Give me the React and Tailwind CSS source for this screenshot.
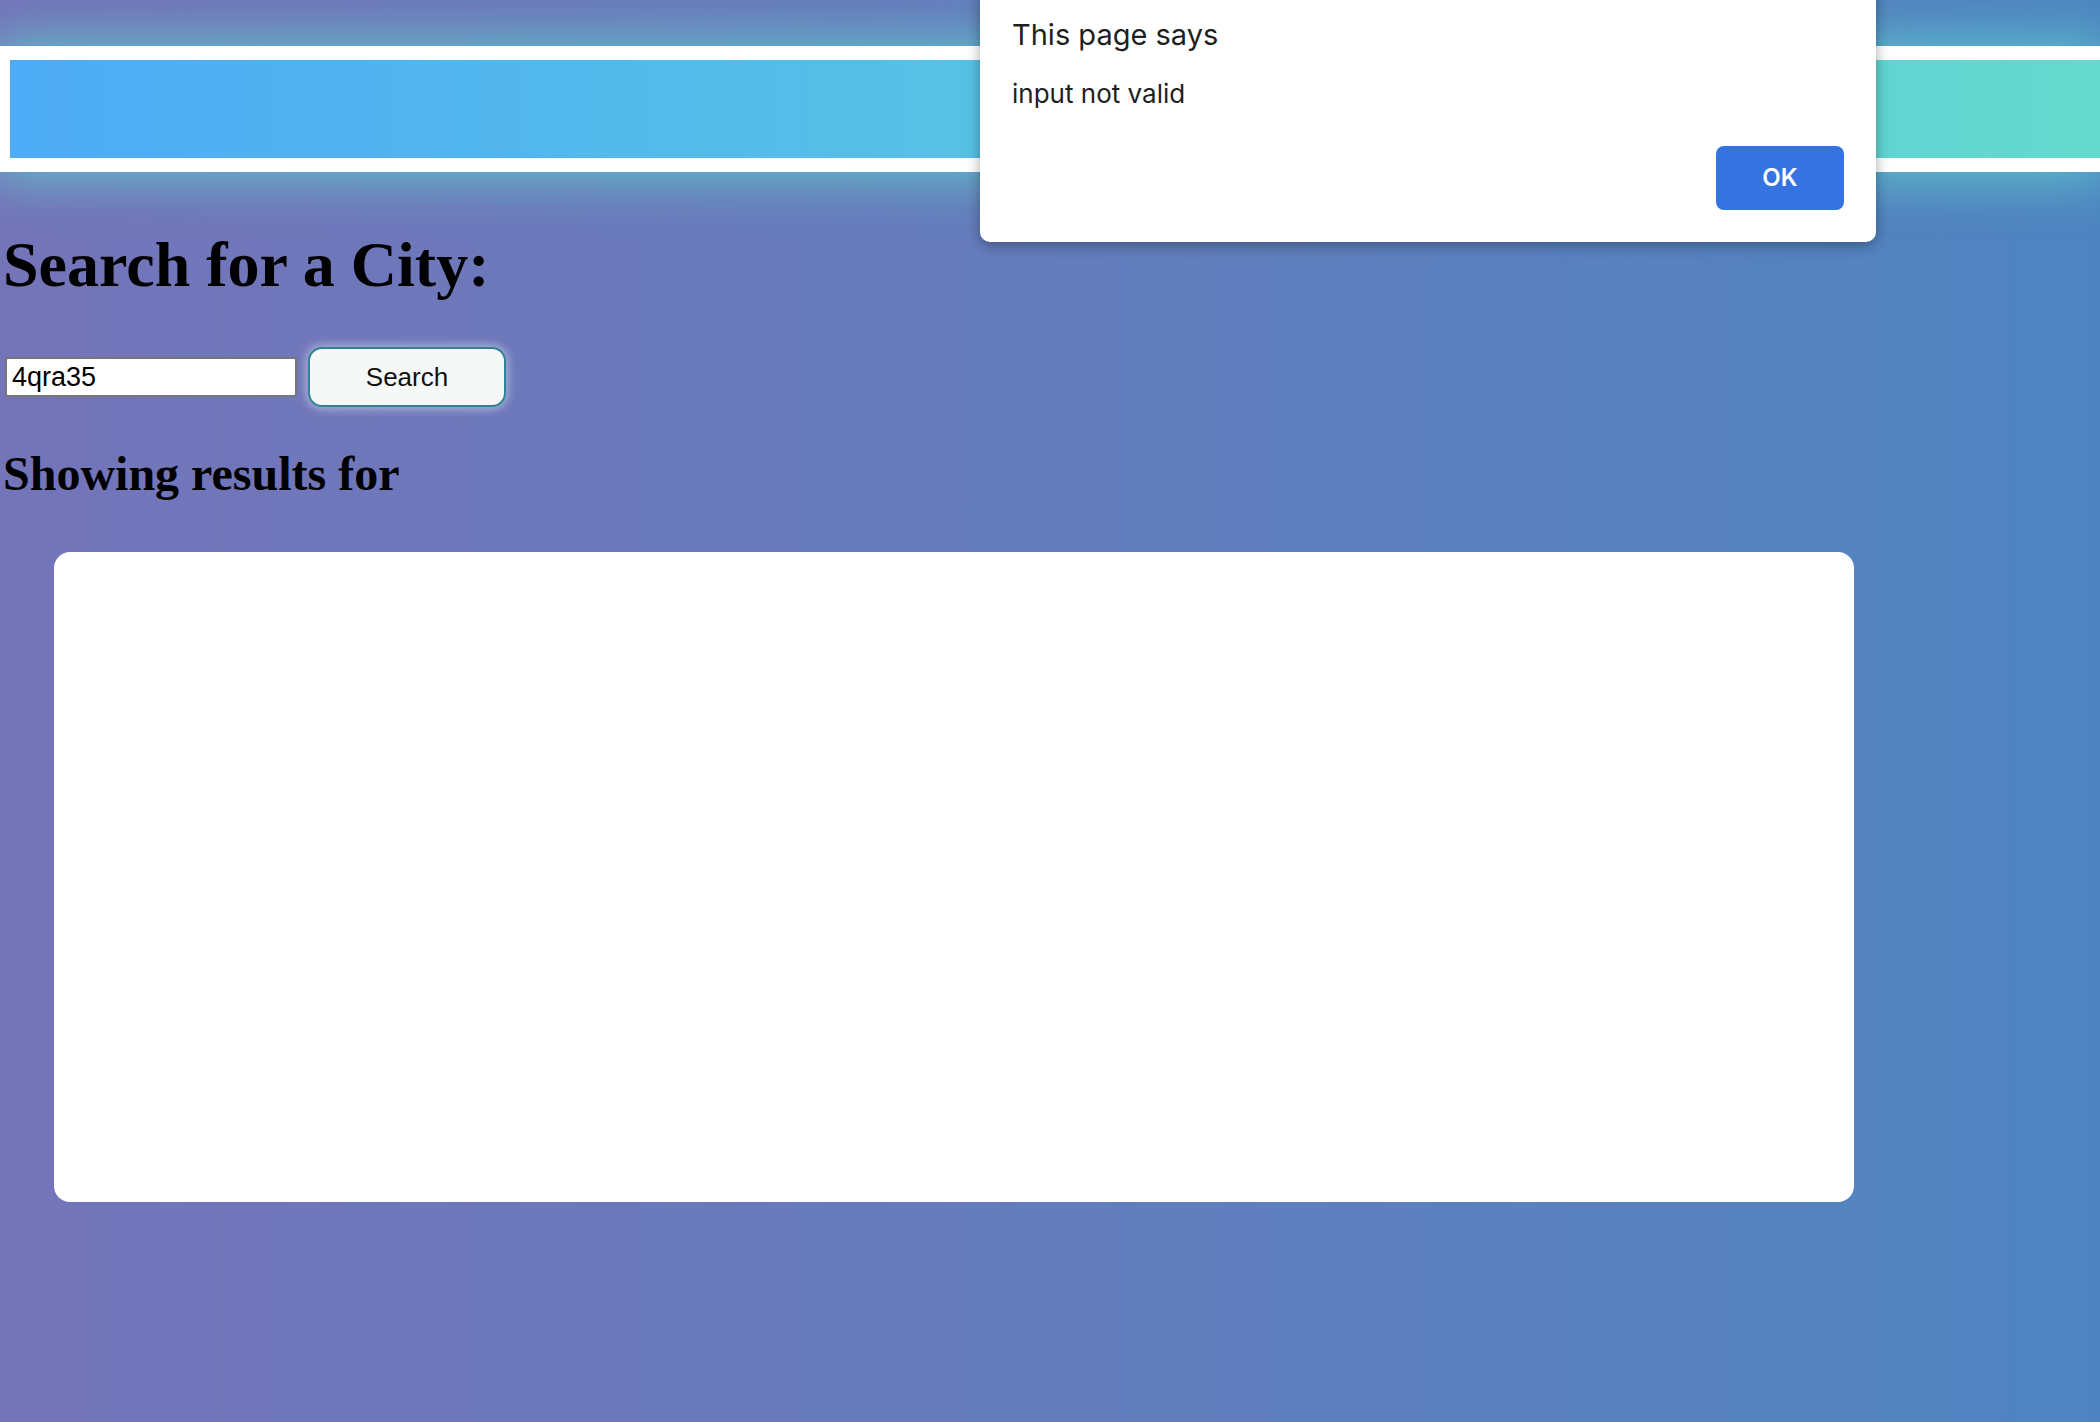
import React, { useState } from 'react';

// Weather search page with the browser's alert dialog open on top
export default function App() {
    const [city, setCity] = useState('4qra35');

    return (
        <div className="relative min-h-[1422px] w-full overflow-hidden bg-linear-to-r from-[#7474b9] to-[#4e85c1]">
            {/* Header bar */}
            <div className="mt-[46px] h-[126px] bg-white py-[14px] pl-[10px] shadow-[0_0_50px_8px_rgba(96,210,205,0.75)]">
                <div className="h-[98px] w-full bg-linear-to-r from-[#4eabf6] to-[#64d9cd]" />
            </div>

            {/* Search */}
            <div className="pl-[3px]">
                <h1
                    className="mt-[56px] text-[64px] leading-[74px] font-bold text-black"
                    style={{ fontFamily: '"Liberation Serif", "Times New Roman", serif' }}
                >
                    Search for a City:
                </h1>

                <div className="mt-[45px] flex h-[60px] items-center pl-[2px]">
                    <input
                        value={city}
                        onChange={(e) => setCity(e.target.value)}
                        className="h-[40px] w-[292px] rounded-[3px] border-2 border-[#767676] bg-white px-[5px] text-[27px] text-black outline-none"
                        style={{ fontFamily: '"Liberation Sans", Arial, sans-serif' }}
                    />
                    <button
                        className="ml-[11px] h-[60px] w-[198px] rounded-[14px] border-2 border-[#2e8494] bg-[#f5f8f7] text-[26px] text-[#111] shadow-[0_0_10px_2px_rgba(255,255,255,0.45)]"
                        style={{ fontFamily: '"Liberation Sans", Arial, sans-serif' }}
                    >
                        Search
                    </button>
                </div>

                <h2
                    className="mt-[39px] text-[48px] leading-[56px] font-bold text-black"
                    style={{ fontFamily: '"Liberation Serif", "Times New Roman", serif' }}
                >
                    Showing results for
                </h2>
            </div>

            {/* Results card */}
            <div className="mt-[50px] ml-[54px] h-[650px] w-[1800px] rounded-[16px] bg-white" />

            {/* Browser alert */}
            <div
                className="absolute top-[-20px] left-[980px] flex h-[262px] w-[896px] flex-col rounded-[10px] bg-white px-[32px] shadow-[0_3px_14px_rgba(0,0,0,0.35)]"
                style={{ fontFamily: 'Inter, "Noto Sans", sans-serif' }}
            >
                <div className="mt-[37px] text-[29px] leading-[36px] text-[#1f1f1f]">This page says</div>
                <div className="mt-[25px] text-[26px] leading-[32px] text-[#1f1f1f]">input not valid</div>
                <button className="mt-[36px] h-[64px] w-[128px] self-end rounded-[8px] bg-[#3574e0] text-[24px] font-semibold text-white">
                    OK
                </button>
            </div>
        </div>
    );
}
